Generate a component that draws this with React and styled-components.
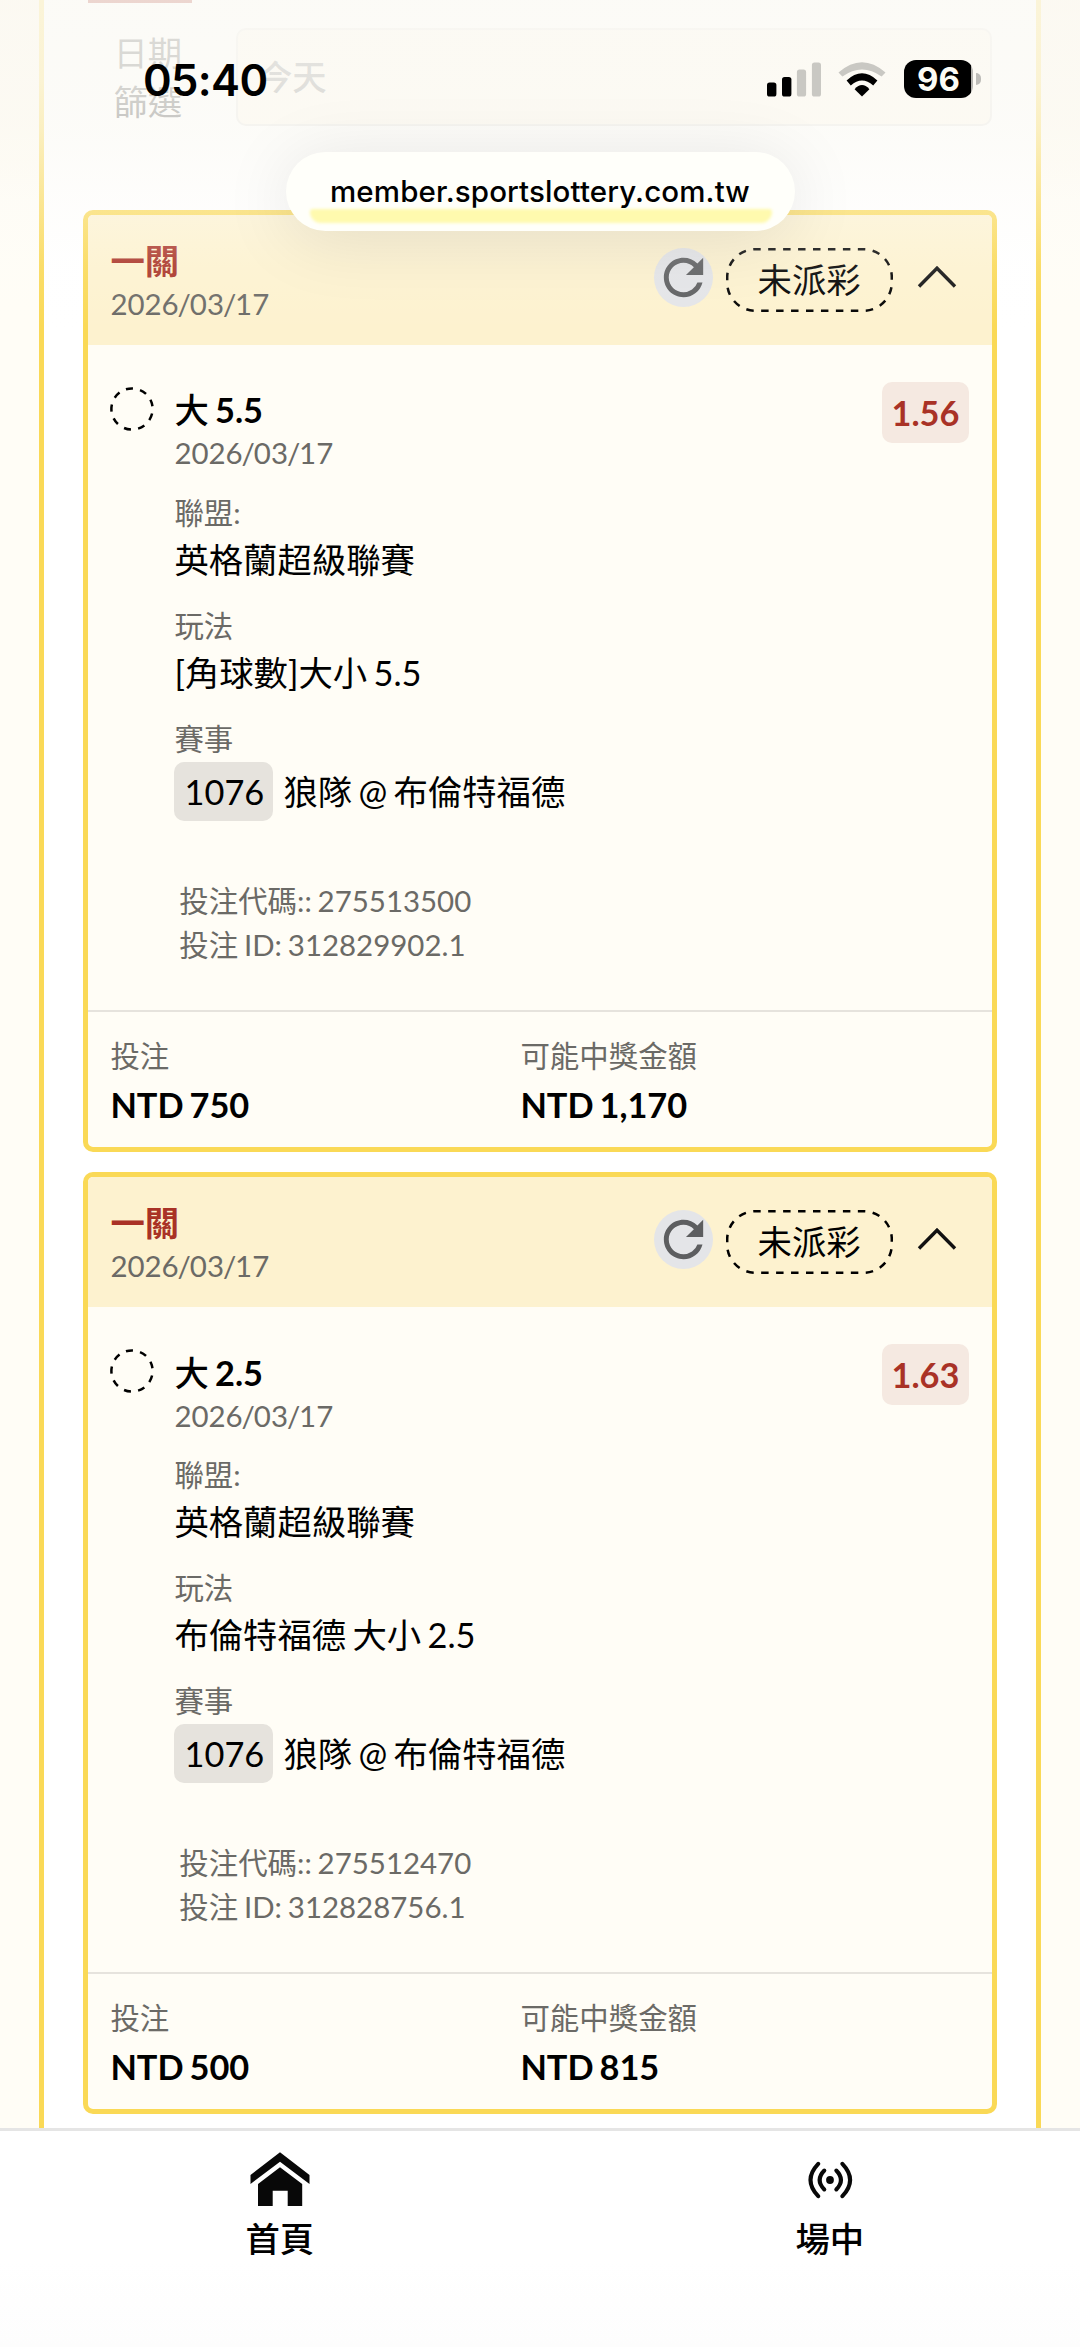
import React, { Fragment } from 'react';
import styled, { createGlobalStyle } from 'styled-components';
import { MdRefresh } from 'react-icons/md';

const bets = [
    {
        id: '312829902.1',
        type: '一關',
        date: '2026/03/17',
        status: '未派彩',
        side: '大',
        line: '5.5',
        odds: '1.56',
        league: '英格蘭超級聯賽',
        market: '[角球數]大小 5.5',
        matchNumber: '1076',
        match: '狼隊 @ 布倫特福德',
        code: '275513500',
        stake: 'NTD 750',
        payout: 'NTD 1,170'
    },
    {
        id: '312828756.1',
        type: '一關',
        date: '2026/03/17',
        status: '未派彩',
        side: '大',
        line: '2.5',
        odds: '1.63',
        league: '英格蘭超級聯賽',
        market: '布倫特福德 大小 2.5',
        matchNumber: '1076',
        match: '狼隊 @ 布倫特福德',
        code: '275512470',
        stake: 'NTD 500',
        payout: 'NTD 815'
    }
];

export default function App() {
    return (
        <Page>
            <GlobalStyle />
            <Content>
                <Frame>
                    <ActiveTab />
                    <Filter>
                        <FilterLabel>日期篩選</FilterLabel>
                        <FilterSelect>今天</FilterSelect>
                    </Filter>
                    <BetList>
                        {bets.map(bet => <Bet key={bet.id} bet={bet} />)}
                    </BetList>
                </Frame>
            </Content>
            <BottomNav>
                <NavItem>
                    <HomeIcon />
                    <span>首頁</span>
                </NavItem>
                <NavItem>
                    <LiveIcon />
                    <span>場中</span>
                </NavItem>
            </BottomNav>
            <TopFade />
            <StatusBar />
            <UrlPill>
                <span>member.sportslottery.com.tw</span>
                <UrlGlow />
            </UrlPill>
        </Page>
    );
}

function Bet({ bet }) {
    return (
        <Card>
            <CardHeader>
                <HeaderText>
                    <BetType>{bet.type}</BetType>
                    <BetDate date={bet.date} />
                </HeaderText>
                <Refresh><MdRefresh size='59px' /></Refresh>
                <Status>
                    <StatusOutline />
                    <span>{bet.status}</span>
                </Status>
                <Chevron />
            </CardHeader>

            <CardBody>
                <PendingCircle />
                <Details>
                    <Pick>{bet.side} <b>{bet.line}</b></Pick>
                    <BetDate date={bet.date} />
                    <Fields>
                        <div>
                            <Small>聯盟:</Small>
                            <Value>{bet.league}</Value>
                        </div>
                        <div>
                            <Small>玩法</Small>
                            <Value>{bet.market}</Value>
                        </div>
                        <div>
                            <Small>賽事</Small>
                            <Match>
                                <MatchNumber>{bet.matchNumber}</MatchNumber>
                                {bet.match}
                            </Match>
                        </div>
                    </Fields>
                    <Codes>
                        <Small>投注代碼:: {bet.code}</Small>
                        <Small>投注 ID: {bet.id}</Small>
                    </Codes>
                </Details>
                <Odds>{bet.odds}</Odds>
            </CardBody>

            <CardFooter>
                <div>
                    <Small>投注</Small>
                    <Amount>{bet.stake}</Amount>
                </div>
                <div>
                    <Small>可能中獎金額</Small>
                    <Amount>{bet.payout}</Amount>
                </div>
            </CardFooter>
        </Card>
    );
}

function BetDate({ date }) {
    return (
        <Small>
            {date.split('/').map((part, i) => (
                <Fragment key={i}>
                    {i > 0 && <Slash>/</Slash>}
                    {part}
                </Fragment>
            ))}
        </Small>
    );
}

function StatusOutline() {
    return (
        <OutlineSvg width='167' height='64' viewBox='0 0 167 64' fill='none'>
            <path
                d='M29.2 1.3H137.8A28 28 0 0 1 165.8 29.3V34.7A28 28 0 0 1 137.8 62.7H29.2A28 28 0 0 1 1.2 34.7V29.3A28 28 0 0 1 29.2 1.3Z'
                stroke='#000'
                strokeWidth='2.5'
                pathLength='405'
                strokeDasharray='7.5 7.5'
                strokeDashoffset='2'
            />
        </OutlineSvg>
    );
}

function PendingCircle() {
    return (
        <CircleSvg width='44' height='44' viewBox='0 0 44 44' fill='none'>
            <circle
                cx='22'
                cy='22'
                r='20.6'
                stroke='#000'
                strokeWidth='2.5'
                pathLength='135'
                strokeDasharray='7.4 7.6'
                transform='rotate(-107 22 22)'
            />
        </CircleSvg>
    );
}

function Chevron() {
    return (
        <ChevronSvg width='40' height='24' viewBox='0 0 40 24' fill='none'>
            <path d='M2 21.5L20 3.2L38 21.5' stroke='#111' strokeWidth='3.4' />
        </ChevronSvg>
    );
}

function HomeIcon() {
    return (
        <svg width='60' height='56' viewBox='0 0 60 56' fill='#080808'>
            <path d='M30 1.3L59.5 24V33L30 10.7L0.5 33V24Z' />
            <path d='M30 16.3L52.2 33V55H37.7V39.7H22.7V55H8V33Z' />
        </svg>
    );
}

function LiveIcon() {
    return (
        <svg width='60' height='56' viewBox='0 0 60 56' fill='none' stroke='#080808' strokeWidth='4' strokeLinecap='round'>
            <circle cx='30' cy='29' r='3.9' fill='#080808' stroke='none' />
            <path d='M24.3 19.5Q15 29 24.3 38.5M36.3 19.5Q45.6 29 36.3 38.5' />
            <path d='M18.2 12.8Q2.8 29 18.2 45.2M42.4 12.8Q57.8 29 42.4 45.2' />
        </svg>
    );
}

function StatusBar() {
    return (
        <StatusRow>
            <Clock>05:40</Clock>
            <SignalSvg width='54' height='35' viewBox='0 0 54 35'>
                <rect x='0' y='20.5' width='9.4' height='14' rx='2.6' />
                <rect x='15' y='15' width='9.4' height='19.5' rx='2.6' />
                <rect x='29.9' y='7.5' width='9.2' height='27' rx='2.6' fill='#c9c8c3' />
                <rect x='44.9' y='0.5' width='9.1' height='34' rx='2.6' fill='#c9c8c3' />
            </SignalSvg>
            <WifiSvg width='48' height='35' viewBox='0 0 48 35'>
                <path d='M0.5 10.4Q24 -10 47.5 10.4L43.6 14.6Q24 0.6 4.4 14.6Z' fill='#c9c8c3' />
                <path d='M8.6 18.4Q24 4 39.4 18.4L35.2 23.4Q24 13.4 12.8 23.4Z' />
                <path d='M16.6 27.2Q24 19 31.4 27.2L24 34.4Z' />
            </WifiSvg>
            <Battery>96</Battery>
            <BatteryCap />
        </StatusRow>
    );
}

const GlobalStyle = createGlobalStyle`
    * { box-sizing: border-box; }

    body {
        margin: 0;
        font-family: 'Lato', 'Noto Sans CJK TC', sans-serif;
        font-size: 34.36px;
        word-spacing: -2.5px;
        color: #000;
    }

    svg {
        display: block;
        flex-shrink: 0;
    }
`;

const Page = styled.div`
    position: relative;
    width: 1080px;
    height: 2347px;
    overflow: hidden;
    background-color: #fffdf6;
`;

const Content = styled.main`
    height: 2128px;
    padding: 0 39px;
    overflow: hidden;
    background: linear-gradient(#fff6e4 0, #fff9ec 110px, #fffdf6 200px);
`;

const Frame = styled.section`
    height: 2140px;
    padding: 0 39.4px;
    border: 5px solid #fad956;
    border-width: 0 5px;
    background-color: #fff;
`;

const ActiveTab = styled.div`
    width: 104px;
    height: 3px;
    margin-left: 5px;
    background-color: #a93226;
`;

const Filter = styled.div`
    display: flex;
    align-items: center;
    height: 98px;
    margin: 25px 5px 0 30px;
`;

const FilterLabel = styled.div`
    width: 122.6px;
    padding-right: 52px;
    line-height: 49px;
    color: #555;
`;

const FilterSelect = styled.div`
    flex: 1;
    height: 98px;
    padding-left: 20px;
    border: 2px solid #e9e7e4;
    border-radius: 10px;
    background-color: #fff9ee;
    line-height: 93px;
    font-weight: 500;
    color: #858585;
`;

const BetList = styled.div`
    display: flex;
    flex-direction: column;
    gap: 19.8px;
    margin-top: 83.7px;
`;

const Card = styled.article`
    height: 942.4px;
    border: 5px solid #fad956;
    border-radius: 10px;
    background-color: #fffdf6;
    overflow: hidden;
`;

const Small = styled.div`
    font-size: 29.45px;
    line-height: 44.2px;
    word-spacing: -1.7px;
    color: #6b6a66;
`;

const Slash = styled.span`
    margin: 0 -1.1px;
`;

const CardHeader = styled.header`
    display: flex;
    height: 130px;
    padding: 25px 35px 0 22px;
    background-color: #fdf2cf;
`;

const HeaderText = styled.div`
    flex: 1;
`;

const BetType = styled.div`
    height: 42px;
    line-height: 41.4px;
    font-weight: 700;
    color: #a93226;
`;

const Refresh = styled.div`
    width: 59px;
    height: 59px;
    margin-top: 8px;
    border-radius: 50%;
    background-color: #e4e5e8;
    color: #5d5e60;
`;

const Status = styled.div`
    position: relative;
    width: 167px;
    height: 64px;
    margin: 8px 0 0 12.5px;
    line-height: 63px;
    text-align: center;
`;

const OutlineSvg = styled.svg`
    position: absolute;
    inset: 0;
`;

const ChevronSvg = styled.svg`
    margin: 25px 0 0 24px;
`;

const CardBody = styled.div`
    display: flex;
    height: 665.6px;
    padding: 42px 22.4px 0 22px;
`;

const CircleSvg = styled.svg`
    margin-right: 20px;
`;

const Details = styled.div`
    flex: 1;
    padding-top: 1.8px;
`;

const Pick = styled.div`
    line-height: 43px;
    font-weight: 500;
`;

const Fields = styled.div`
    display: flex;
    flex-direction: column;
    gap: 18.3px;
    margin-top: 15.3px;
`;

const Value = styled.div`
    line-height: 50.3px;
`;

const Match = styled.div`
    display: flex;
    height: 58.5px;
    margin-top: 1.3px;
    line-height: 59px;
`;

const MatchNumber = styled.span`
    width: 99px;
    margin-right: 10px;
    padding-left: 1px;
    border-radius: 10px;
    background-color: #e6e3dd;
    text-align: center;
`;

const Codes = styled.div`
    padding: 58.4px 0 0 4.9px;
`;

const Odds = styled.div`
    width: 87.5px;
    height: 61.4px;
    margin-top: -5px;
    border-radius: 10px;
    background-color: #f5e9e1;
    line-height: 61.4px;
    text-align: center;
    font-weight: 700;
    color: #a93226;
`;

const CardFooter = styled.footer`
    display: grid;
    grid-template-columns: 410px 1fr;
    padding: 21.5px 22px 0;
    border-top: 2px solid #e6e3dd;
`;

const Amount = styled.div`
    line-height: 53px;
    font-weight: 700;
`;

const BottomNav = styled.nav`
    display: grid;
    grid-template-columns: 550px 550px;
    height: 219px;
    padding: 20px 0 0 4.8px;
    border-top: 3px solid #e5e5e5;
    background: linear-gradient(#fff 60%, #fdfdfd);
`;

const NavItem = styled.div`
    display: flex;
    flex-direction: column;
    align-items: center;
    gap: 6px;
    line-height: 52px;
    font-weight: 500;
`;

const TopFade = styled.div`
    position: absolute;
    top: 0;
    left: 0;
    width: 100%;
    height: 330px;
    background: linear-gradient(
        rgba(251, 250, 245, 0.82) 0,
        rgba(251, 250, 245, 0.79) 80px,
        rgba(251, 250, 245, 0.67) 130px,
        rgba(252, 251, 247, 0.33) 215px,
        rgba(253, 253, 250, 0.12) 265px,
        rgba(255, 255, 255, 0) 330px
    );
`;

const StatusRow = styled.div`
    position: absolute;
    top: 58px;
    left: 0;
    display: flex;
    align-items: center;
    width: 100%;
    height: 42px;
    padding-left: 143px;
    font-family: 'Inter', sans-serif;
`;

const Clock = styled.div`
    width: 623.5px;
    padding-top: 2px;
    font-size: 43.5px;
    font-weight: 600;
    line-height: 43px;
    letter-spacing: -0.6px;
`;

const SignalSvg = styled.svg`
    margin-right: 17.5px;
`;

const WifiSvg = styled.svg`
    margin-right: 18px;
`;

const Battery = styled.div`
    width: 69px;
    height: 38px;
    border-radius: 12px;
    background: linear-gradient(90deg, #000 67px, #b5b4b0 67.5px);
    line-height: 38px;
    text-align: center;
    font-size: 33px;
    font-weight: 700;
    color: #fdfcf5;
`;

const BatteryCap = styled.div`
    width: 4.5px;
    height: 12px;
    margin-left: 3px;
    border-radius: 0 5px 5px 0;
    background-color: #bdbcb8;
`;

const UrlPill = styled.div`
    position: absolute;
    top: 152px;
    left: 285.5px;
    width: 509px;
    height: 78.7px;
    border-radius: 40px;
    background-color: #fffffa;
    box-shadow: 0 8px 70px rgba(0, 0, 0, 0.1);
    font-family: 'Inter', sans-serif;
    font-size: 29.5px;
    font-weight: 500;
    line-height: 78.7px;
    letter-spacing: 0.13px;
    text-align: center;

    span { position: relative; z-index: 1; }
`;

const UrlGlow = styled.div`
    position: absolute;
    left: 24px;
    bottom: 7.5px;
    width: 462px;
    height: 14px;
    border-radius: 4px 4px 14px 14px;
    background-color: #fffaae;
    filter: blur(1.5px);
`;
